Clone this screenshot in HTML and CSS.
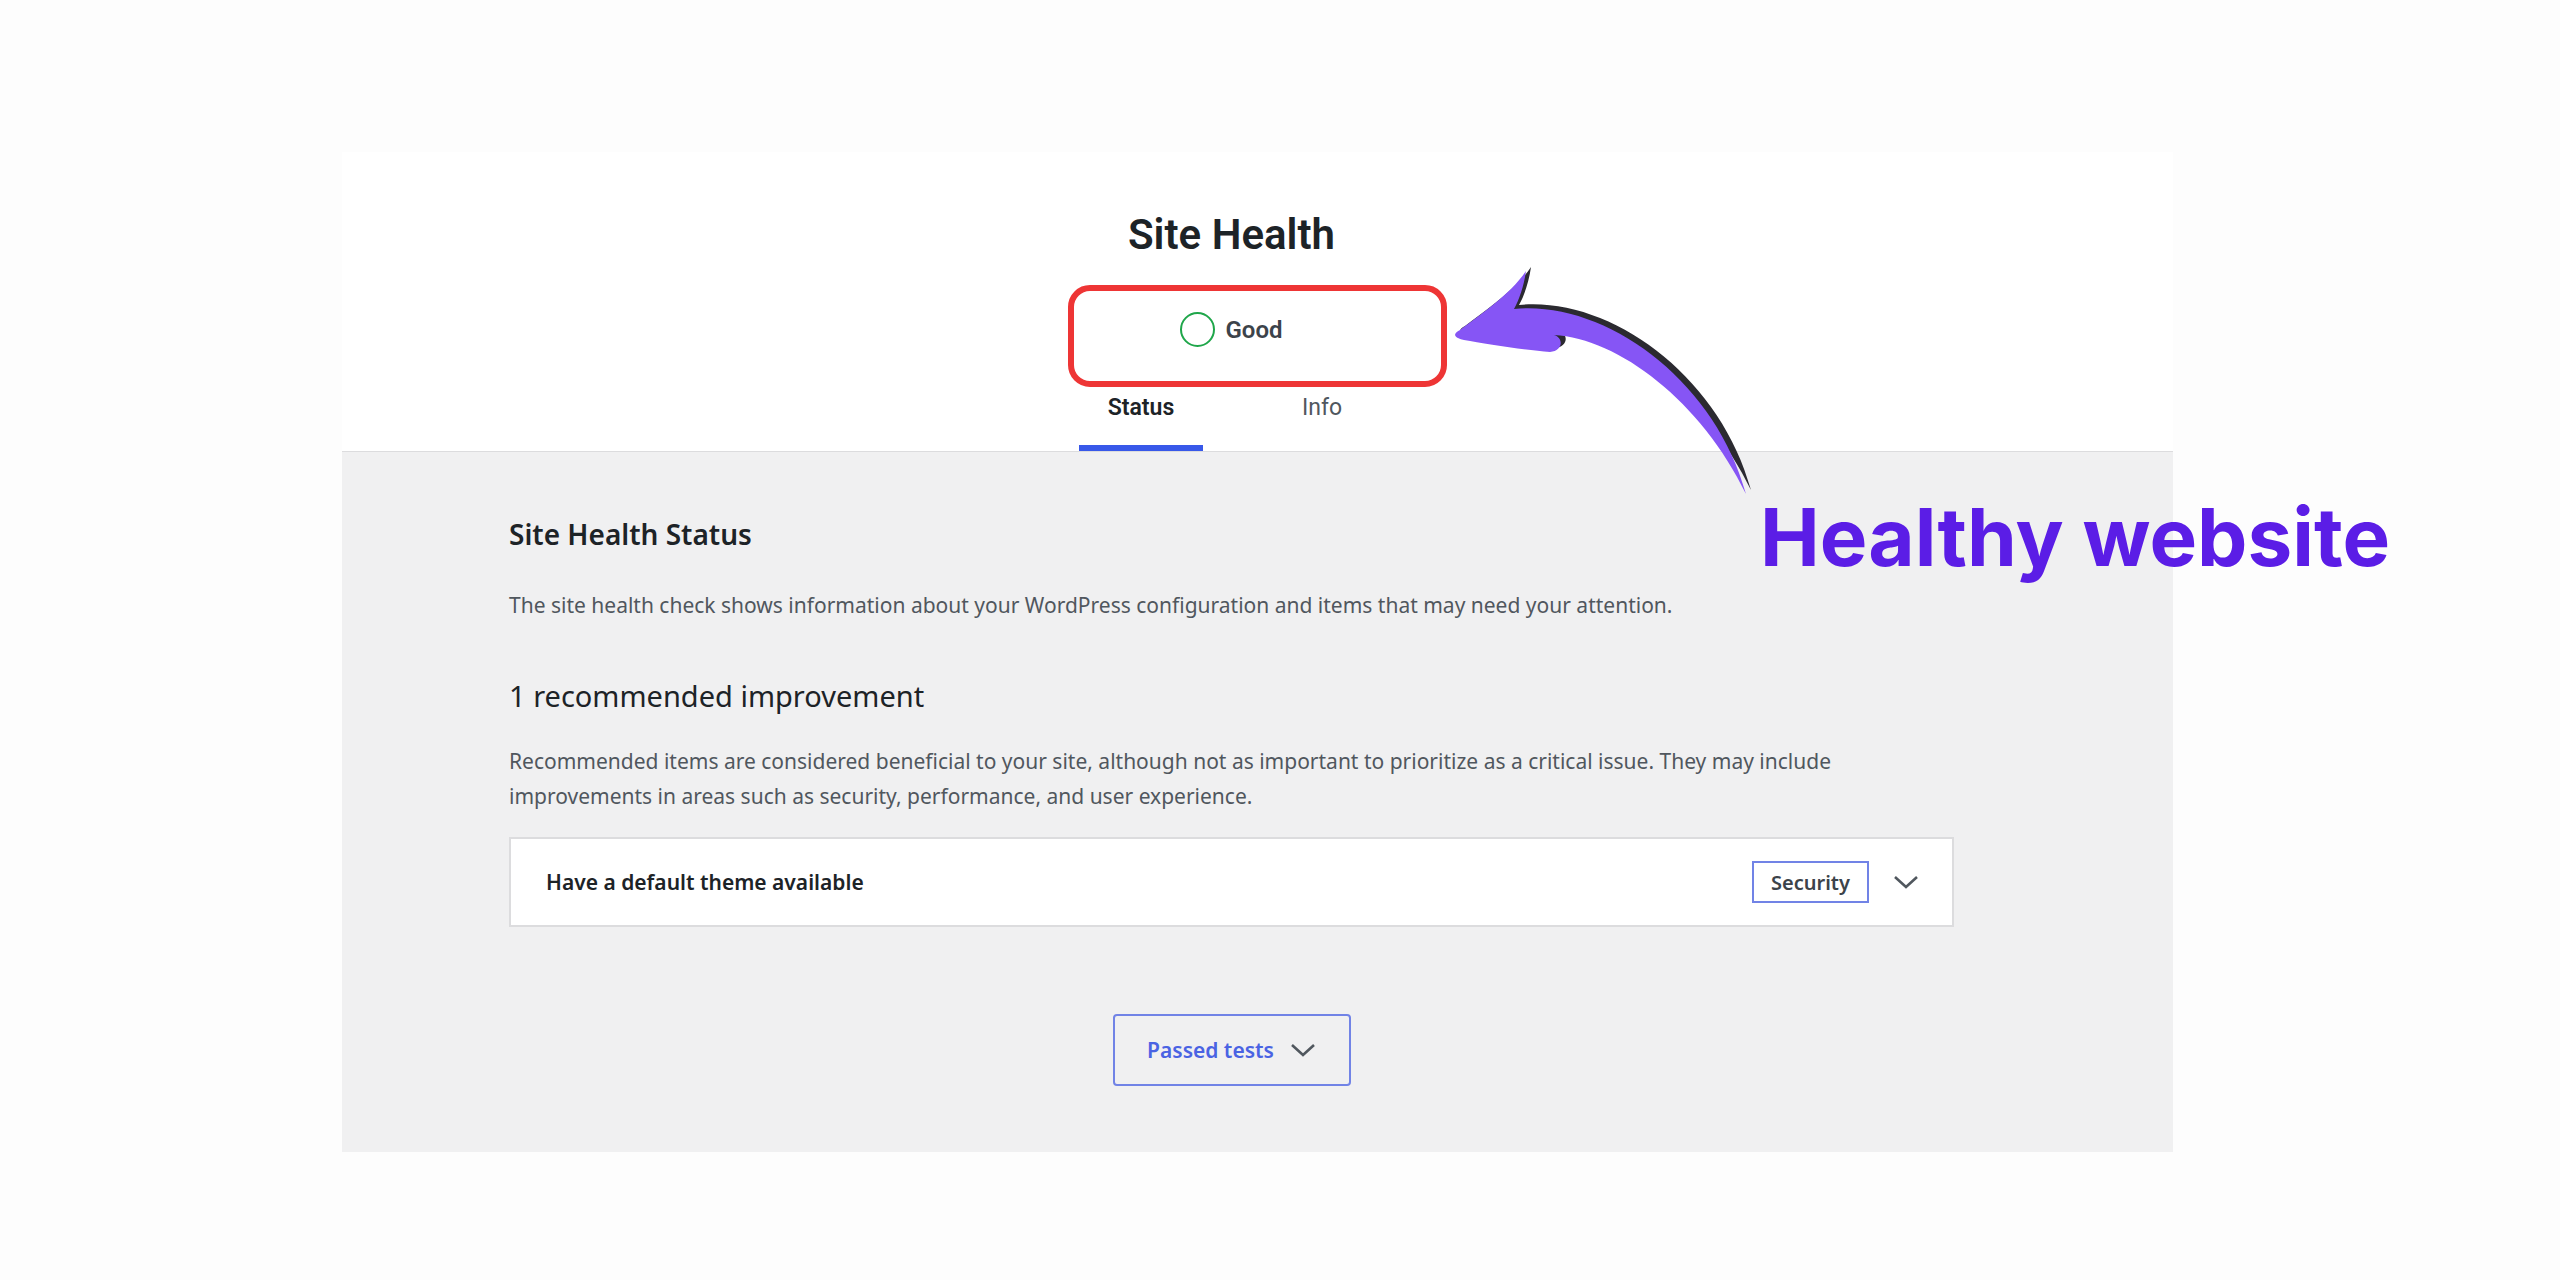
FILE: index.html
```html
<!DOCTYPE html>
<html lang="en">
<head>
  <meta charset="UTF-8" />
  <meta name="viewport" content="width=device-width, initial-scale=1.0" />
  <title>Site Health - Healthy website</title>
  <link rel="stylesheet" href="styles.css">
</head>
<body>
  <div class="stage">
    <div class="panel">
      <header class="health-header">
        <div class="inner">
          <h1 class="title">Site Health</h1>
          <div class="score">
            <span class="score-ring"></span>
            <span class="score-label">Good</span>
          </div>
          <nav class="tabs">
            <a href="#" class="tab active">Status</a>
            <a href="#" class="tab">Info</a>
          </nav>
        </div>
      </header>

      <main class="health-body">
        <div class="inner">
          <h2 class="section-title">Site Health Status</h2>
          <p class="section-text">The site health check shows information about your WordPress configuration and items that may need your attention.</p>

          <h3 class="issues-title">1 recommended improvement</h3>
          <p class="issues-text">Recommended items are considered beneficial to your site, although not as important to prioritize as a critical issue. They may include improvements in areas such as security, performance, and user experience.</p>

          <div class="accordion">
            <div class="accordion-row">
              <span class="accordion-title">Have a default theme available</span>
              <span class="badge">Security</span>
              <svg class="chevron" viewBox="0 0 26 14" width="26" height="14">
                <path d="M2 2 L13 12 L24 2" fill="none" stroke="#50575e" stroke-width="2.6" />
              </svg>
            </div>
          </div>

          <div class="passed">
            <button class="passed-btn">
              <span>Passed tests</span>
              <svg class="chevron" viewBox="0 0 26 14" width="26" height="14">
                <path d="M2 2 L13 12 L24 2" fill="none" stroke="#50575e" stroke-width="2.6" />
              </svg>
            </button>
          </div>
        </div>
      </main>
    </div>

    <!-- annotations drawn over the screenshot -->
    <div class="highlight-box"></div>

    <svg class="callout-arrow" viewBox="0 0 320 260" width="320" height="260">
      <path transform="translate(5,-4)" fill="#2b2a30"
        d="M20 80 C38 66 70 45 86 21 C84 36 79 50 74 59 C165 50 275 130 306 244 C262 152 178 88 114 85 C124 88 123 101 110 102 C85 100 45 94 24 90 C14 88 12 84 20 80 Z" />
      <path fill="#8655f5"
        d="M20 80 C38 66 70 45 86 21 C84 36 79 50 74 59 C165 50 275 130 306 244 C262 152 178 88 114 85 C124 88 123 101 110 102 C85 100 45 94 24 90 C14 88 12 84 20 80 Z" />
    </svg>

    <div class="callout-text">Healthy website</div>
  </div>
</body>
</html>
```

FILE: styles.css
```css
:root {
  --wp-dark: #1d2327;
  --wp-text: #50575e;
  --wp-gray: #f0f0f1;
  --wp-border: #dcdcde;
  --wp-blue: #3858e9;
  --badge-blue: #7183e6;
  --good-green: #1fa64a;
  --mark-red: #ee3535;
  --callout: #5b1de6;
}

* {
  box-sizing: border-box;
  margin: 0;
  padding: 0;
}

body {
  font-family: "Segoe UI", Roboto, "Noto Sans", sans-serif;
  color: var(--wp-text);
  background: #fdfdfd;
}

.stage {
  position: relative;
  width: 2560px;
  height: 1280px;
  padding: 152px 0 0 342px;
}

.panel {
  width: 1831px;
}

.inner {
  width: 1445px;
  margin-left: 167px;
}

/* header */

.health-header {
  background: #ffffff;
  height: 300px;
  border-bottom: 1px solid var(--wp-border);
}

.health-header .inner {
  display: flex;
  flex-direction: column;
  align-items: center;
  padding-top: 58px;
}

.title {
  font-size: 42px;
  line-height: 50px;
  font-weight: 600;
  color: var(--wp-dark);
}

.score {
  display: flex;
  align-items: center;
  gap: 10px;
  height: 35px;
  margin-top: 52px;
}

.score-ring {
  width: 35px;
  height: 35px;
  border: 2px solid var(--good-green);
  border-radius: 50%;
}

.score-label {
  font-size: 24px;
  font-weight: 600;
  color: #3c434a;
}

.tabs {
  display: flex;
  gap: 57px;
  margin-top: 46px;
}

.tab {
  width: 124px;
  text-align: center;
  font-size: 23px;
  line-height: 30px;
  padding-bottom: 22px;
  border-bottom: 6px solid transparent;
  color: var(--wp-text);
  text-decoration: none;
}

.tab.active {
  font-weight: 600;
  color: var(--wp-dark);
  border-bottom-color: var(--wp-blue);
}

/* body */

.health-body {
  font-family: "Segoe UI", "Noto Sans", sans-serif;
  background: var(--wp-gray);
  height: 700px;
  padding-top: 64px;
}

.section-title {
  font-size: 28px;
  line-height: 36px;
  font-weight: 600;
  color: var(--wp-dark);
}

.section-text {
  font-size: 21px;
  line-height: 35px;
  margin-top: 36px;
}

.issues-title {
  font-size: 29px;
  line-height: 38px;
  font-weight: 400;
  color: var(--wp-dark);
  margin-top: 54px;
}

.issues-text {
  font-size: 21px;
  line-height: 35px;
  margin-top: 29px;
}

.accordion {
  margin-top: 23px;
  background: #ffffff;
  border: 2px solid var(--wp-border);
}

.accordion-row {
  display: flex;
  align-items: center;
  height: 86px;
  padding: 0 33px 0 35px;
}

.accordion-title {
  flex: 1;
  font-size: 21px;
  font-weight: 600;
  color: var(--wp-dark);
}

.badge {
  display: inline-flex;
  align-items: center;
  justify-content: center;
  width: 117px;
  height: 42px;
  border: 2px solid var(--badge-blue);
  font-size: 20px;
  font-weight: 600;
  color: #3c434a;
  margin-right: 24px;
}

.passed {
  display: flex;
  justify-content: center;
  margin-top: 87px;
}

.passed-btn {
  display: inline-flex;
  align-items: center;
  justify-content: center;
  gap: 16px;
  width: 238px;
  height: 72px;
  background: transparent;
  border: 2px solid var(--badge-blue);
  border-radius: 4px;
  font-family: inherit;
  font-size: 21px;
  font-weight: 600;
  color: #4a63e3;
  white-space: nowrap;
}

/* annotations */

.highlight-box {
  position: absolute;
  left: 1068px;
  top: 285px;
  width: 379px;
  height: 102px;
  border: 6px solid var(--mark-red);
  border-radius: 22px;
}

.callout-arrow {
  position: absolute;
  left: 1440px;
  top: 250px;
}

.callout-text {
  position: absolute;
  left: 1760px;
  top: 497px;
  font-family: Inter, "Liberation Sans", sans-serif;
  font-size: 80px;
  line-height: 80px;
  font-weight: 700;
  color: var(--callout);
  white-space: nowrap;
}
```
